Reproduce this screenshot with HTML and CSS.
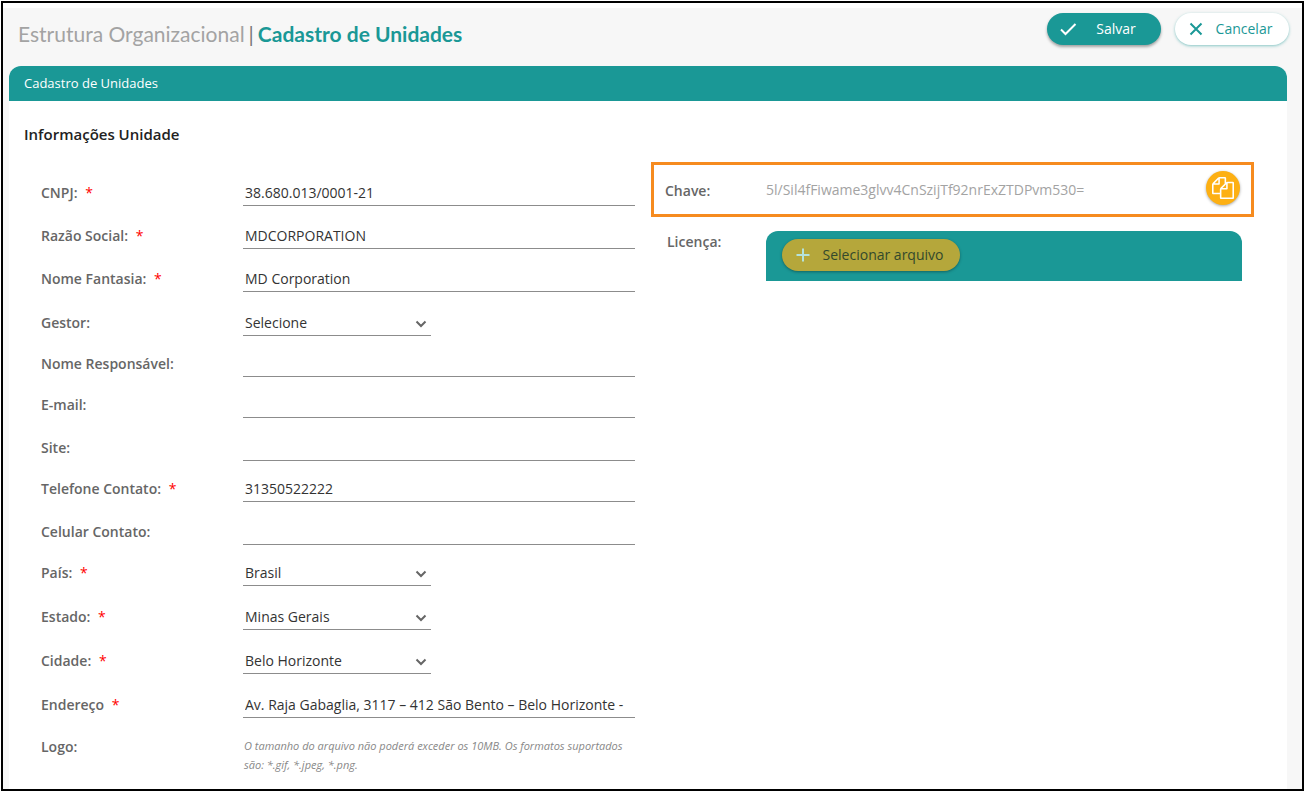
FILE: index.html
```html
<!DOCTYPE html>
<html lang="pt-BR">
<head>
<meta charset="utf-8">
<title>Cadastro de Unidades</title>
<link rel="stylesheet" href="styles.css">
</head>
<body>
<div class="frame">
  <header class="topbar">
    <h1 class="crumb"><span class="crumb-parent">Estrutura Organizacional</span><span class="crumb-sep">|</span><span class="crumb-current">Cadastro de Unidades</span></h1>
    <div class="actions">
      <button type="submit" form="unit" class="btn btn-save">
        <svg class="icon" viewBox="0 0 18 18" aria-hidden="true"><path d="M2 9.500l4.500 4.500L16.500 4"/></svg>
        <span class="btn-text">Salvar</span>
      </button>
      <button type="button" class="btn btn-cancel">
        <svg class="icon" viewBox="0 0 18 18" aria-hidden="true"><path d="M3.500 3.500l11 11M14.500 3.500l-11 11"/></svg>
        <span class="btn-text">Cancelar</span>
      </button>
    </div>
  </header>
  <main class="card">
    <h2 class="card-head">Cadastro de Unidades</h2>
    <form class="card-body" id="unit">
      <h3 class="section-title">Informações Unidade</h3>
      <div class="columns">
        <div class="fields">
          <div class="row"><label class="label" for="cnpj">CNPJ: <span class="req">*</span></label><input class="control" id="cnpj" type="text" value="38.680.013/0001-21"></div>
          <div class="row"><label class="label" for="razao">Razão Social: <span class="req">*</span></label><input class="control" id="razao" type="text" value="MDCORPORATION"></div>
          <div class="row"><label class="label" for="fantasia">Nome Fantasia: <span class="req">*</span></label><input class="control" id="fantasia" type="text" value="MD Corporation"></div>
          <div class="row row-tall"><label class="label" for="gestor">Gestor:</label>
            <span class="select-wrap"><select class="control" id="gestor"><option>Selecione</option></select><svg class="chevron" viewBox="0 0 12 8" aria-hidden="true"><path d="M1.500 1.500L6 6l4.500-4.500"/></svg></span></div>
          <div class="row row-compact"><label class="label" for="resp">Nome Responsável:</label><input class="control" id="resp" type="text"></div>
          <div class="row row-compact"><label class="label" for="email">E-mail:</label><input class="control" id="email" type="email"></div>
          <div class="row"><label class="label" for="site">Site:</label><input class="control" id="site" type="text"></div>
          <div class="row row-compact"><label class="label" for="tel">Telefone Contato: <span class="req">*</span></label><input class="control" id="tel" type="text" value="31350522222"></div>
          <div class="row"><label class="label" for="cel">Celular Contato:</label><input class="control" id="cel" type="text"></div>
          <div class="row row-compact"><label class="label" for="pais">País: <span class="req">*</span></label>
            <span class="select-wrap"><select class="control" id="pais"><option>Brasil</option></select><svg class="chevron" viewBox="0 0 12 8" aria-hidden="true"><path d="M1.500 1.500L6 6l4.500-4.500"/></svg></span></div>
          <div class="row row-tall"><label class="label" for="estado">Estado: <span class="req">*</span></label>
            <span class="select-wrap"><select class="control" id="estado"><option>Minas Gerais</option></select><svg class="chevron" viewBox="0 0 12 8" aria-hidden="true"><path d="M1.500 1.500L6 6l4.500-4.500"/></svg></span></div>
          <div class="row row-tall"><label class="label" for="cidade">Cidade: <span class="req">*</span></label>
            <span class="select-wrap"><select class="control" id="cidade"><option>Belo Horizonte</option></select><svg class="chevron" viewBox="0 0 12 8" aria-hidden="true"><path d="M1.500 1.500L6 6l4.500-4.500"/></svg></span></div>
          <div class="row row-tall"><label class="label" for="endereco">Endereço <span class="req">*</span></label><input class="control" id="endereco" type="text" value="Av. Raja Gabaglia, 3117 – 412 São Bento – Belo Horizonte -"></div>
          <div class="row row-note"><span class="label">Logo:</span><p class="note">O tamanho do arquivo não poderá exceder os 10MB. Os formatos suportados são: *.gif, *.jpeg, *.png.</p></div>
        </div>
        <div class="license">
          <div class="key-box">
            <label class="label" for="chave">Chave:</label>
            <input class="key" id="chave" type="text" readonly value="5l/Sil4fFiwame3glvv4CnSzijTf92nrExZTDPvm530=">
            <button type="button" class="copy" aria-label="Copiar chave">
              <svg viewBox="0 0 1792 1792" aria-hidden="true"><path d="M1696 384q40 0 68 28t28 68v1216q0 40-28 68t-68 28h-960q-40 0-68-28t-28-68v-288h-544q-40 0-68-28t-28-68v-672q0-40 20-88t48-76l408-408q28-28 76-48t88-20h416q40 0 68 28t28 68v328q68-40 128-40h416zm-544 213l-299 299h299v-299zm-640-384l-299 299h299v-299zm196 647l316-316v-416h-384v416q0 40-28 68t-68 28h-416v640h512v-256q0-40 20-88t48-76zm956 804v-1152h-384v416q0 40-28 68t-68 28h-416v640h896z"/></svg>
            </button>
          </div>
          <div class="upload-row">
            <span class="label">Licença:</span>
            <div class="upload">
              <button type="button" class="btn btn-file">
                <svg class="icon" viewBox="0 0 18 18" aria-hidden="true"><path d="M9 2.500v13M2.500 9h13"/></svg>
                <span class="btn-text">Selecionar arquivo</span>
              </button>
            </div>
          </div>
        </div>
      </div>
    </form>
  </main>
</div>
</body>
</html>
```
FILE: styles.css
```css
* { box-sizing: border-box; }
body {
  margin: 0;
  padding: 1px;
  min-height: 100vh;
  display: flex;
  background: #fff;
  color: #333;
  font-family: "Open Sans", "Noto Sans", sans-serif;
  font-size: 14px;
}
h1, h2, h3, p { margin: 0; }
input, select, button { font: inherit; color: inherit; }

.frame {
  flex: 1;
  min-width: 0;
  display: flex;
  flex-direction: column;
  border: 2px solid #000;
  padding: 5px 15px 0 6px;
  background: linear-gradient(#fff 5px, #f7f7f7 5px);
}
.topbar {
  display: flex;
  justify-content: space-between;
  align-items: flex-start;
  height: 58px;
  margin-right: -2px;
  padding: 5px 0 0 9px;
}
.crumb {
  font-size: 21px;
  line-height: 42px;
  font-weight: 400;
  font-family: Lato, sans-serif;
  white-space: nowrap;
}
.crumb-parent { color: #a3a3a3; }
.crumb-sep { color: #777; margin: 0 4px; }
.crumb-current { color: #1a9896; font-weight: 700; }
.actions { display: flex; gap: 14px; }

.btn {
  display: flex;
  align-items: center;
  height: 32px;
  border: 0;
  border-radius: 16px;
  padding: 0 12px;
}
.btn-text {
  flex: 1;
  padding: 0 0 2px 6px;
  text-align: center;
  white-space: nowrap;
}
.icon {
  width: 18px;
  height: 18px;
  flex: none;
  fill: none;
  stroke: currentColor;
  stroke-width: 2;
}
.btn-save {
  width: 114px;
  background: #1a9896;
  color: #fff;
  box-shadow: 0 2px 3px rgba(0, 0, 0, .35);
}
.btn-cancel {
  width: 114px;
  background: #fff;
  color: #1a9896;
  box-shadow: 0 1px 3px rgba(26, 152, 150, .5);
}

.card {
  flex: 1;
  background: #fff;
  border-radius: 12px 12px 0 0;
}
.card-head {
  padding: 0 15px;
  border-radius: 12px 12px 0 0;
  background: #1a9896;
  color: #fff;
  font-size: 13px;
  font-weight: 400;
  line-height: 35px;
}
.card-body { padding: 20px 33px 0 15px; }
.section-title {
  color: #222;
  font-size: 15px;
  font-weight: 600;
  line-height: 26px;
}
.columns {
  display: grid;
  grid-template-columns: 594fr 603fr;
  gap: 16px;
  padding: 15px 0 0 17px;
}
.fields, .license { min-width: 0; }
.fields { padding-top: 1px; }
.row {
  display: flex;
  align-items: flex-end;
  height: 43px;
}
.row-tall { height: 44px; }
.row-compact { height: 41px; }
.label {
  flex: none;
  width: 202px;
  color: #666;
  font-size: 14px;
  font-weight: 600;
  line-height: 26px;
}
.req {
  margin-left: 4px;
  color: #f00;
  font-weight: 400;
}
.control {
  flex: 1;
  min-width: 0;
  height: 26px;
  padding: 0 0 0 2px;
  border: 0;
  border-bottom: 1px solid #8c8c8c;
  border-radius: 0;
  background: transparent;
  appearance: none;
}
.select-wrap { position: relative; display: flex; width: 188px; }
.chevron {
  position: absolute;
  right: 4px;
  top: 10px;
  width: 12px;
  height: 8px;
  fill: none;
  stroke: #666;
  stroke-width: 2;
  pointer-events: none;
}
.row-note { height: auto; align-items: flex-start; padding-top: 16px; }
.note {
  flex: 1;
  padding: 2px 0 0 1px;
  color: #888;
  font-size: 11px;
  font-style: italic;
  line-height: 19px;
}

.key-box {
  display: flex;
  align-items: flex-start;
  height: 55px;
  padding: 6px 11px 0;
  border: 3px solid #f68b1f;
}
.key-box .label { width: 101px; line-height: 40px; }
.key {
  flex: 1;
  min-width: 0;
  height: 36px;
  padding: 0;
  border: 0;
  background: transparent;
  color: #a3a3a3;
}
.copy {
  display: grid;
  place-items: center;
  width: 34px;
  height: 34px;
  padding: 0;
  border: 0;
  border-radius: 50%;
  background: #fdb013;
  box-shadow: 0 1px 3px rgba(0, 0, 0, .35);
}
.copy svg { width: 22px; height: 22px; fill: #fff; }
.upload-row {
  display: flex;
  align-items: flex-start;
  margin-top: 14px;
  padding: 0 12px 0 16px;
}
.upload-row .label { width: 99px; line-height: 22px; }
.upload {
  flex: 1;
  padding: 8px 16px 10px;
  border-radius: 12px 12px 0 0;
  background: #1a9896;
}
.btn-file {
  width: 178px;
  background: #b5a73b;
  color: #33492c;
  box-shadow: 0 1px 3px rgba(0, 0, 0, .35);
}
.btn-file .icon { color: #b5e3dc; }
```
